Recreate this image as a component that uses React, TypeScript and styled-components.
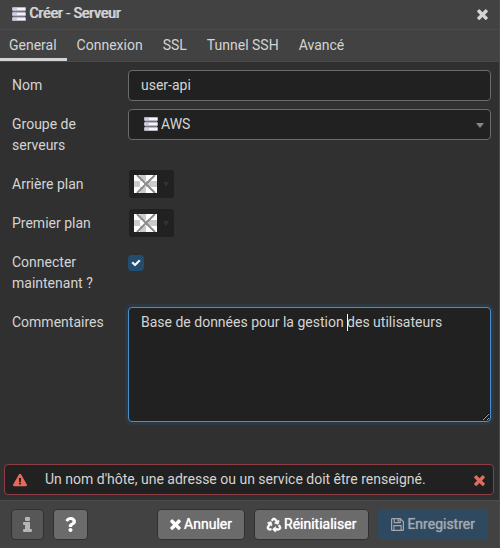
import React from "react";
import styled, { createGlobalStyle, css } from "styled-components";
import { FaCheck, FaExclamationTriangle, FaQuestion, FaRecycle } from "react-icons/fa";

const GlobalStyle = createGlobalStyle`
  *, *::before, *::after { box-sizing: border-box; }
  html, body, #root { height: 100%; }
  body {
    margin: 0;
    background: #303030;
    color: #d4d4d4;
    font: 14px/21px Roboto, "Liberation Sans", sans-serif;
  }
  button, input, textarea, select { font: inherit; color: inherit; margin: 0; }
`;

const Dialog = styled.section`
  min-height: 100%;
  display: flex;
  flex-direction: column;
  background: #303030;
  border-right: 1px solid #4a4a4a;
`;

const TitleBar = styled.header`
  height: 30px;
  flex: none;
  display: flex;
  align-items: center;
  gap: 3px;
  padding: 0 11px 2px 12px;
  background: #424242;
  border-bottom: 1px solid #4a4a4a;
`;

const Title = styled.h1`
  flex: 1;
  margin: 0;
  font-size: 14px;
  line-height: 21px;
  font-weight: 400;
  text-shadow: 1px 0 currentColor;
`;

const IconButton = styled.button<{ $danger?: boolean }>`
  display: flex;
  padding: 2px 0 0;
  border: 0;
  background: none;
  color: ${(p) => (p.$danger ? "#e66a5c" : "#d4d4d4")};
  cursor: pointer;
`;

const Tabs = styled.nav`
  height: 32px;
  flex: none;
  display: flex;
  background: #424242;
  border-bottom: 1px solid #4a4a4a;
`;

const Tab = styled.button<{ $active?: boolean }>`
  padding: 2px 10px 0;
  border: 0;
  border-bottom: 3px solid ${(p) => (p.$active ? "#d4d4d4" : "transparent")};
  background: none;
  line-height: 21px;
  white-space: nowrap;
  cursor: pointer;

  &:first-child {
    padding-left: 9px;
  }
`;

const Form = styled.form`
  flex: 1;
  display: flex;
  flex-direction: column;
  gap: 8px;
  padding: 8px 8px 8px 12px;
`;

const Row = styled.div`
  display: grid;
  grid-template-columns: 116px minmax(0, 1fr);
  align-items: start;
`;

const Label = styled.label`
  padding: 5px 12px 5px 0;
`;

const field = css`
  width: 100%;
  border: 1px solid #6b6b6b;
  border-radius: 4px;
  background: #212121;
  outline: none;
`;

const TextInput = styled.input`
  ${field}
  height: 31px;
  padding: 0 12px 2px;
`;

const Overlaid = styled.div`
  position: relative;
`;

const Select = styled.select`
  ${field}
  display: block;
  height: 31px;
  padding: 0 24px 0 32px;
  appearance: none;
`;

const SelectIcon = styled.span`
  position: absolute;
  top: 8px;
  left: 16px;
  display: flex;
  pointer-events: none;
`;

const SelectArrow = styled.span`
  position: absolute;
  top: 14px;
  right: 7px;
  border: 4px solid transparent;
  border-top: 5px solid #888;
  border-bottom: 0;
  pointer-events: none;
`;

const ColorButton = styled.button`
  display: flex;
  align-items: center;
  gap: 6px;
  width: 45px;
  height: 28px;
  margin: 1px;
  padding: 0 5px;
  border: 0;
  border-radius: 3px;
  background: #212121;
  cursor: pointer;
`;

const ColorArrow = styled.span`
  border: 3px solid transparent;
  border-top: 5px solid #333;
  border-bottom: 0;
`;

const CheckCell = styled.span`
  position: relative;
  display: flex;
  width: 16px;
  height: 16px;
  margin-top: 8px;
`;

const CheckInput = styled.input`
  appearance: none;
  width: 16px;
  height: 16px;
  border-radius: 4px;
  background: #234d6e;
`;

const CheckMark = styled(FaCheck)`
  position: absolute;
  inset: 4px;
  width: 8px;
  height: 8px;
  color: #fff;
  stroke-width: 50px;
  overflow: visible;
  pointer-events: none;
`;

const TextArea = styled.textarea`
  ${field}
  display: block;
  height: 115px;
  padding: 4px 12px;
  border-color: #4a8fc9;
  box-shadow: 0 0 0 3px rgba(35, 77, 110, 0.3);
  caret-color: transparent;
  resize: vertical;
`;

const Caret = styled.span`
  position: absolute;
  top: 7px;
  left: 219px;
  width: 1px;
  height: 17px;
  background: #fff;
  pointer-events: none;
`;

const Alert = styled.div`
  display: flex;
  align-items: center;
  min-height: 31px;
  margin: 0 5px 5px 4px;
  padding: 0 8px;
  border: 1px solid #8c3d45;
  border-radius: 4px;
  background: #212121;
`;

const AlertIcon = styled(FaExclamationTriangle)`
  flex: none;
  width: 14px;
  height: 14px;
  margin-right: 18px;
  color: #e66a5c;
`;

const AlertText = styled.span`
  flex: 1;
`;

const Footer = styled.footer`
  flex: none;
  display: flex;
  gap: 9px;
  padding: 8px 11px;
  background: #424242;
  border-top: 1px solid #4a4a4a;
`;

const Spacer = styled.span`
  flex: 1;
`;

const Button = styled.button<{ $kind?: "primary" | "square" }>`
  display: flex;
  align-items: center;
  justify-content: center;
  gap: 3px;
  height: 31px;
  min-width: 33px;
  padding: 0 ${(p) => (p.$kind === "square" ? "9px" : "12px")};
  border: 1px solid #303030;
  border-radius: 4px;
  background: #6b6b6b;
  color: #fff;
  text-shadow: 0 0 1px currentColor;
  white-space: nowrap;
  cursor: pointer;

  &:disabled {
    background: #575757;
    color: #b5b5b5;
    cursor: default;
  }

  ${(p) =>
    p.$kind === "primary" &&
    css`
      &:disabled {
        background: #2f4a60;
        border-color: #2f4a60;
        color: #a2a9af;
      }
    `}
`;

const RecycleIcon = styled(FaRecycle)`
  stroke-width: 24px;
  overflow: visible;
`;

const Cross = () => (
  <svg width="11" height="11" viewBox="302 334 1188 1220" fill="currentColor" aria-hidden="true">
    <path d="M1490 1322q0 40-28 68l-136 136q-28 28-68 28t-68-28l-294-294-294 294q-28 28-68 28t-68-28l-136-136q-28-28-28-68t28-68l294-294-294-294q-28-28-28-68t28-68l136-136q28-28 68-28t68 28l294 294 294-294q28-28 68-28t68 28l136 136q28 28 28 68t-28 68l-294 294 294 294q28 28 28 68z" />
  </svg>
);

const InfoIcon = () => (
  <svg width="9" height="15" viewBox="0 0 9 15" fill="currentColor" aria-hidden="true">
    <rect x="2" y="0" width="5" height="4" rx="1" />
    <path d="M1 5h5.5q.5 0 .5.5V12h1q1 0 1 1v1q0 1-1 1H1q-1 0-1-1v-1q0-1 1-1h1V8H1Q0 8 0 7V6q0-1 1-1z" />
  </svg>
);

const SaveIcon = () => (
  <svg width="13" height="13" viewBox="0 0 13 13" fill="none" stroke="currentColor" aria-hidden="true">
    <path d="M1.2.6h8l3.2 3.2v8q0 .6-.6.6H1.2q-.6 0-.6-.6V1.2q0-.6.6-.6z" strokeWidth="1.2" />
    <path d="M3.2.6v4h6v-4M2.9 12.4V7.6h7.2v4.8" strokeWidth="1.1" />
    <path d="M7.4 1.2v2.4" strokeWidth="1.6" />
  </svg>
);

const ServerIcon = () => (
  <svg width="14" height="14" viewBox="0 0 14 14" aria-hidden="true">
    {[0, 5, 10].map((y) => (
      <g key={y}>
        <rect x="0" y={y} width="14" height="4" rx="1" fill="#b9b8c9" />
        <rect x="1" y={y + 1} width="12" height="2" fill="#f4f4f8" />
        <rect x="1" y={y + 1} width="4" height="2" fill="#d0cfdd" />
        {y < 10 && <rect x="1" y={y + 4} width="12" height="1" fill="#77767f" />}
      </g>
    ))}
  </svg>
);

const NoColor = () => (
  <svg width="23" height="18" viewBox="0 0 23 18" aria-hidden="true">
    <rect width="23" height="18" fill="#fff" />
    <path d="M6 0h6v6H6zM18 6h5v6h-5zM0 6h6v6H0zM6 12h6v6H6zM12 6h6v6h-6z" fill="#ccc" />
    <path d="M3 0 21 18M21 0 3 18" stroke="#8c8c8c" strokeWidth="2" />
  </svg>
);

const TABS = ["General", "Connexion", "SSL", "Tunnel SSH", "Avancé"];

export default function App() {
  return (
    <>
      <GlobalStyle />
      <Dialog>
        <TitleBar>
          <ServerIcon />
          <Title>Créer - Serveur</Title>
          <IconButton type="button" aria-label="Fermer">
            <Cross />
          </IconButton>
        </TitleBar>
        <Tabs role="tablist">
          {TABS.map((tab, i) => (
            <Tab key={tab} type="button" role="tab" aria-selected={i === 0} $active={i === 0}>
              {tab}
            </Tab>
          ))}
        </Tabs>
        <Form id="server" onSubmit={(e) => e.preventDefault()}>
          <Row>
            <Label htmlFor="name">Nom</Label>
            <TextInput id="name" defaultValue="user-api" />
          </Row>
          <Row>
            <Label htmlFor="group">Groupe de serveurs</Label>
            <Overlaid>
              <Select id="group" defaultValue="AWS">
                <option>AWS</option>
              </Select>
              <SelectIcon>
                <ServerIcon />
              </SelectIcon>
              <SelectArrow />
            </Overlaid>
          </Row>
          <Row>
            <Label htmlFor="background">Arrière plan</Label>
            <ColorButton id="background" type="button">
              <NoColor />
              <ColorArrow />
            </ColorButton>
          </Row>
          <Row>
            <Label htmlFor="foreground">Premier plan</Label>
            <ColorButton id="foreground" type="button">
              <NoColor />
              <ColorArrow />
            </ColorButton>
          </Row>
          <Row>
            <Label htmlFor="connect">Connecter maintenant ?</Label>
            <CheckCell>
              <CheckInput id="connect" type="checkbox" defaultChecked />
              <CheckMark />
            </CheckCell>
          </Row>
          <Row>
            <Label htmlFor="comment">Commentaires</Label>
            <Overlaid>
              <TextArea
                id="comment"
                defaultValue="Base de données pour la gestion des utilisateurs"
                spellCheck={false}
              />
              <Caret />
            </Overlaid>
          </Row>
        </Form>
        <Alert role="alert">
          <AlertIcon />
          <AlertText>Un nom d'hôte, une adresse ou un service doit être renseigné.</AlertText>
          <IconButton type="button" aria-label="Fermer l'alerte" $danger>
            <Cross />
          </IconButton>
        </Alert>
        <Footer>
          <Button type="button" $kind="square" aria-label="Informations" disabled>
            <InfoIcon />
          </Button>
          <Button type="button" $kind="square" aria-label="Aide">
            <FaQuestion size={15} />
          </Button>
          <Spacer />
          <Button type="button">
            <Cross />
            Annuler
          </Button>
          <Button type="reset" form="server">
            <RecycleIcon />
            Réinitialiser
          </Button>
          <Button type="submit" form="server" $kind="primary" disabled>
            <SaveIcon />
            Enregistrer
          </Button>
        </Footer>
      </Dialog>
    </>
  );
}
